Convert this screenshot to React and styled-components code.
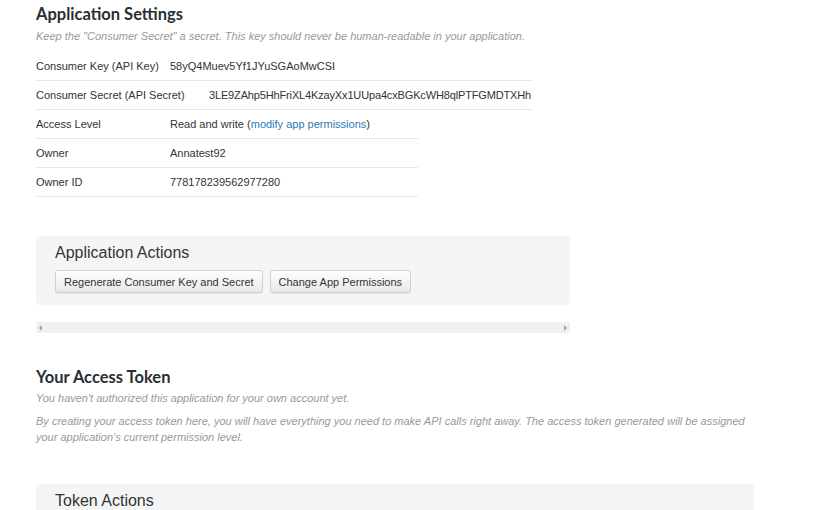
import React from 'react';
import styled, { createGlobalStyle } from 'styled-components';

const GlobalStyle = createGlobalStyle`
    html, body {
        margin: 0;
        padding: 0;
        background: #fff;
    }
    body {
        font-family: "Liberation Sans", Arial, sans-serif;
        font-size: 11px;
        color: #333;
    }
`;

const Page = styled.div`
    width: 718px;
    padding: 4px 0 0 36px;
`;

const Heading = styled.h2`
    margin: 0;
    font-family: Lato, "Liberation Sans", sans-serif;
    font-size: 16.5px;
    font-weight: 700;
    line-height: 20px;
    color: #292f33;
`;

const Note = styled.p`
    margin: ${({ $top }) => $top || 4}px 0 0;
    font-style: italic;
    font-size: 11px;
    line-height: 16px;
    color: #999;
`;

const Table = styled.div`
    margin-top: 8px;
    display: flex;
    flex-direction: column;
`;

const Row = styled.div`
    display: flex;
    align-items: center;
    width: ${({ $width }) => $width}px;
    height: 28px;
    border-bottom: 1px solid #e8e8e8;
    line-height: 15px;
`;

const Label = styled.div`
    flex: 0 0 ${({ $width }) => $width || 134}px;
`;

const Value = styled.div`
    white-space: nowrap;
    letter-spacing: ${({ $tight }) => ($tight ? '-0.15px' : 'normal')};
`;

const Link = styled.a`
    color: #2b7bb9;
    text-decoration: none;
`;

const Panel = styled.section`
    box-sizing: border-box;
    width: ${({ $width }) => $width}px;
    margin-top: ${({ $top }) => $top}px;
    padding: 8px 19px 12px;
    background: #f5f5f5;
    border-radius: 4px;
`;

const PanelTitle = styled.h3`
    margin: 0;
    font-size: 16px;
    font-weight: 400;
    line-height: 18px;
    color: #333;
`;

const ButtonRow = styled.div`
    display: flex;
    gap: 7px;
    margin-top: 8px;
`;

const Button = styled.button`
    height: 23px;
    padding: 0 8px;
    font-family: "Liberation Sans", Arial, sans-serif;
    font-size: 11px;
    color: #333;
    background: linear-gradient(#fff, #e8e8e8);
    border: 1px solid #d0d0d0;
    border-radius: 3px;
    box-shadow: 0 1px 1px rgba(0, 0, 0, 0.06);
    cursor: pointer;
`;

const Scrollbar = styled.div`
    display: flex;
    align-items: center;
    justify-content: space-between;
    width: 534px;
    height: 11px;
    margin-top: 17px;
    padding: 0 3px;
    box-sizing: border-box;
    background: #f0f0f0;
`;

const Arrow = styled.span`
    width: 0;
    height: 0;
    border-top: 3px solid transparent;
    border-bottom: 3px solid transparent;
    ${({ $dir }) =>
        $dir === 'left'
            ? 'border-right: 3px solid #a3a3a3;'
            : 'border-left: 3px solid #a3a3a3;'}
`;

const Section = styled.div`
    margin-top: ${({ $top }) => $top}px;
`;

const Paragraph = styled.p`
    margin: 7px 0 0;
    font-style: italic;
    font-size: 11px;
    line-height: 16px;
    color: #999;
`;

const App = () => (
    <>
        <GlobalStyle />
        <Page>
            <Heading>Application Settings</Heading>
            <Note>Keep the "Consumer Secret" a secret. This key should never be human-readable in your application.</Note>
            <Table>
                <Row $width={496}>
                    <Label>Consumer Key (API Key)</Label>
                    <Value>58yQ4Muev5Yf1JYuSGAoMwCSI</Value>
                </Row>
                <Row $width={496}>
                    <Label $width={173}>Consumer Secret (API Secret)</Label>
                    <Value $tight>3LE9ZAhp5HhFriXL4KzayXx1UUpa4cxBGKcWH8qlPTFGMDTXHh</Value>
                </Row>
                <Row $width={382}>
                    <Label>Access Level</Label>
                    <Value>
                        Read and write (<Link href="#">modify app permissions</Link>)
                    </Value>
                </Row>
                <Row $width={382}>
                    <Label>Owner</Label>
                    <Value>Annatest92</Value>
                </Row>
                <Row $width={382}>
                    <Label>Owner ID</Label>
                    <Value>778178239562977280</Value>
                </Row>
            </Table>

            <Panel $width={534} $top={39}>
                <PanelTitle>Application Actions</PanelTitle>
                <ButtonRow>
                    <Button>Regenerate Consumer Key and Secret</Button>
                    <Button>Change App Permissions</Button>
                </ButtonRow>
            </Panel>

            <Scrollbar>
                <Arrow $dir="left" />
                <Arrow $dir="right" />
            </Scrollbar>

            <Section $top={34}>
                <Heading>Your Access Token</Heading>
                <Note $top={3}>You haven't authorized this application for your own account yet.</Note>
                <Paragraph>
                    By creating your access token here, you will have everything you need to make API calls right away. The access token generated will be assigned your application's current permission level.
                </Paragraph>
            </Section>

            <Panel $width={718} $top={39}>
                <PanelTitle>Token Actions</PanelTitle>
                <ButtonRow>
                    <Button>Create my access token</Button>
                </ButtonRow>
            </Panel>
        </Page>
    </>
);

export default App;
